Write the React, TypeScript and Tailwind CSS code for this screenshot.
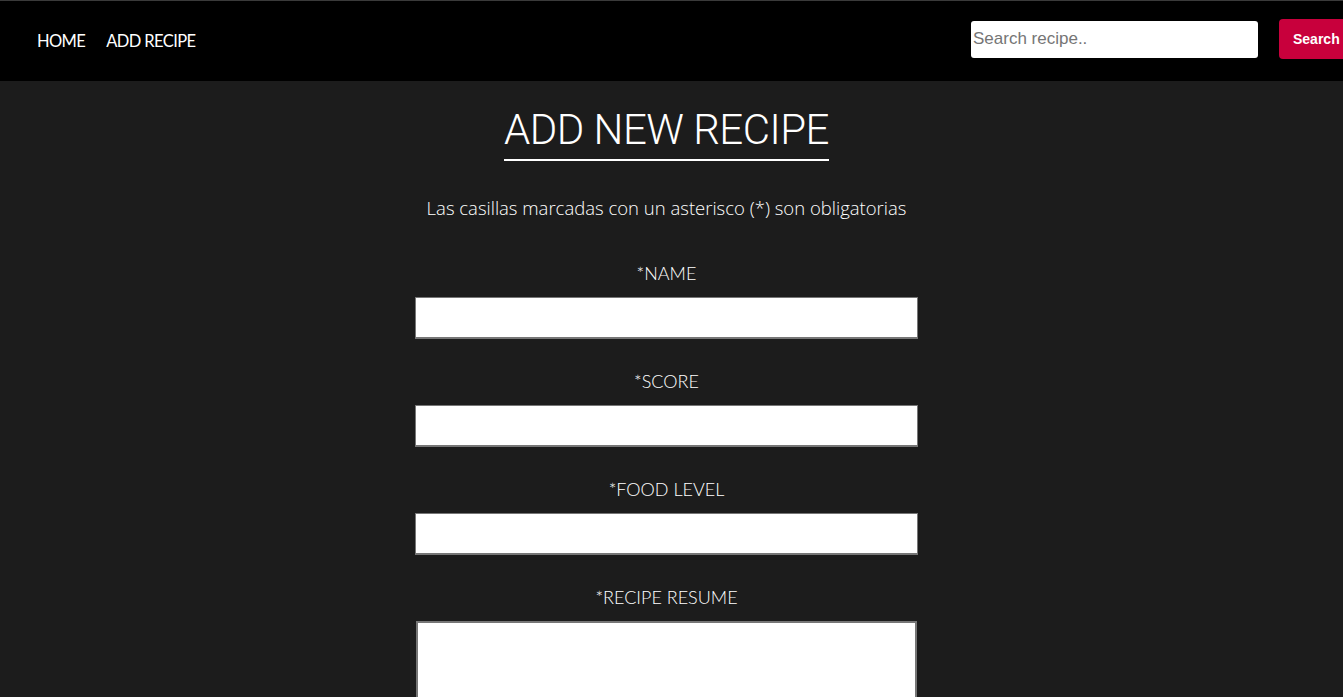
import React from "react";

export default function App() {
  const font = { fontFamily: "'Lato', 'Noto Sans', sans-serif" };
  const fields = ["*NAME", "*SCORE", "*FOOD LEVEL"];
  return (
    <div className="h-[697px] bg-[#1c1c1c] text-white overflow-hidden" style={font}>
      <div className="border-t border-[#3a3a3a] bg-black h-[81px] flex items-center justify-between pl-[37px] overflow-hidden">
        <nav className="flex gap-[21px] text-[16.5px] tracking-[-0.6px] text-white">
          <a>HOME</a>
          <a>ADD RECIPE</a>
        </nav>
        <div className="flex items-center -mr-[16px] mb-[4px]">
          <input
            placeholder="Search recipe.."
            className="w-[287px] h-[37px] bg-white rounded-[3px] px-[2px] text-[17px] text-black placeholder:text-[#757575] outline-none"
            style={{ fontFamily: "'Liberation Sans', Arial, sans-serif" }}
          />
          <button
            className="ml-[21px] h-[40px] w-[80px] bg-[#c8003c] rounded-[4px] text-left pl-[14px] text-[14px] font-bold text-white"
            style={{ fontFamily: "'Liberation Sans', Arial, sans-serif" }}
          >
            Search
          </button>
        </div>
      </div>
      <div className="flex flex-col items-center pr-[10px]">
        <h1
          className="mt-[22px] text-[42px] font-light leading-[54px] border-b-2 border-white pb-[2px] tracking-[-0.5px]"
          style={{ fontFamily: "'Roboto', sans-serif" }}
        >
          ADD NEW RECIPE
        </h1>
        <p
          className="mt-[35px] text-[18.5px] font-light leading-[24px]"
          style={{ fontFamily: "'Open Sans', sans-serif" }}
        >
          Las casillas marcadas con un asterisco (*) son obligatorias
        </p>
        <div className="mt-[41px] flex flex-col items-center">
          {fields.map((f) => (
            <div key={f} className="flex flex-col items-center mb-[30px]">
              <label className="text-[18px] font-light leading-[24px] mb-[12px]">{f}</label>
              <input className="w-[503px] h-[42px] bg-white border border-b-2 border-[#767676] outline-none" />
            </div>
          ))}
          <div className="flex flex-col items-center">
            <label className="text-[18px] font-light leading-[24px] mb-[12px]">*RECIPE RESUME</label>
            <textarea className="w-[501px] h-[120px] bg-white border-2 border-[#767676] outline-none resize-none" />
          </div>
        </div>
      </div>
    </div>
  );
}
